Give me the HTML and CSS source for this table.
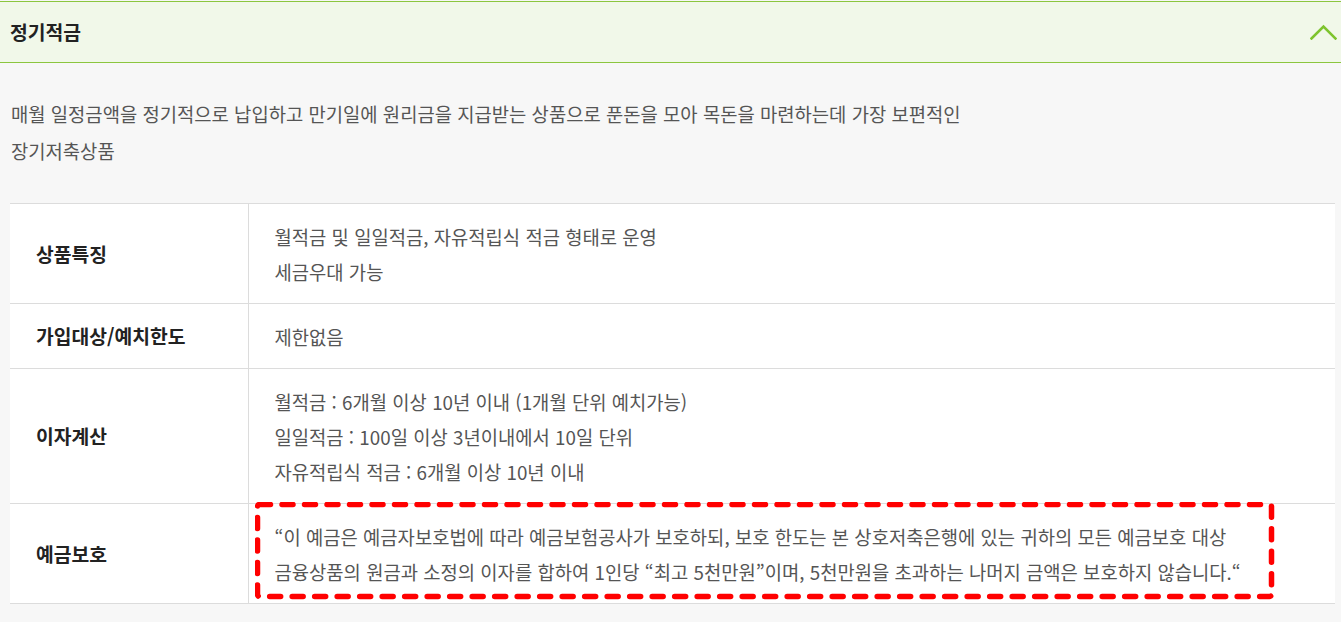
FILE: index.html
```html
<!DOCTYPE html>
<html lang="ko">
<head>
<meta charset="utf-8">
<title>정기적금</title>
<link rel="stylesheet" href="styles.css">
</head>
<body>
<div class="panel">
  <div class="panel-head">
    <h2 class="panel-title">정기적금</h2>
    <svg class="chevron" width="27" height="16" viewBox="0 0 27 16" aria-hidden="true">
      <polyline points="1.5,14.5 13.5,2.5 25.5,14.5" fill="none" stroke="#7ec42e" stroke-width="2.6" stroke-linecap="square"/>
    </svg>
  </div>
  <div class="panel-body">
    <p class="desc">매월 일정금액을 정기적으로 납입하고 만기일에 원리금을 지급받는 상품으로 푼돈을 모아 목돈을 마련하는데 가장 보편적인<br>장기저축상품</p>
    <table class="info">
      <tbody>
        <tr>
          <th>상품특징</th>
          <td>월적금 및 일일적금, 자유적립식 적금 형태로 운영<br>세금우대 가능</td>
        </tr>
        <tr>
          <th>가입대상/예치한도</th>
          <td>제한없음</td>
        </tr>
        <tr>
          <th>이자계산</th>
          <td>월적금 : 6개월 이상 10년 이내 (1개월 단위 예치가능)<br>일일적금 : 100일 이상 3년이내에서 10일 단위<br>자유적립식 적금 : 6개월 이상 10년 이내</td>
        </tr>
        <tr>
          <th>예금보호</th>
          <td class="protect">“이 예금은 예금자보호법에 따라 예금보험공사가 보호하되, 보호 한도는 본 상호저축은행에 있는 귀하의 모든 예금보호 대상<br>금융상품의 원금과 소정의 이자를 합하여 1인당 “최고 5천만원”이며, 5천만원을 초과하는 나머지 금액은 보호하지 않습니다.“
            <svg class="mark" width="1020" height="98" viewBox="0 0 1020 98" aria-hidden="true">
              <rect x="2.5" y="2.5" width="1014" height="92" rx="2" fill="none" stroke="#ff0000" stroke-width="5.5" stroke-linecap="round" stroke-dasharray="11 11.5"/>
            </svg>
          </td>
        </tr>
      </tbody>
    </table>
  </div>
</div>
</body>
</html>
```
FILE: styles.css
```css
* { box-sizing: border-box; }
html, body {
  margin: 0;
  padding: 0;
  background: #f7f7f7;
}
body {
  font-family: "Noto Sans CJK KR", "Noto Sans", sans-serif;
  font-size: 18.8px;
  color: #555;
}
.panel {
  padding-top: 1px;
}
.panel-head {
  height: 62px;
  display: flex;
  align-items: center;
  justify-content: space-between;
  padding: 0 4px 0 10px;
  background: #f1f8e9;
  border-top: 1px solid #8cc63f;
  border-bottom: 1px solid #8cc63f;
}
.panel-title {
  margin: 0;
  font-size: 19.3px;
  font-weight: 700;
  color: #222;
}
.chevron {
  display: block;
  margin-top: 0;
}
.panel-body {
  padding: 0 6px 0 10px;
}
.desc {
  margin: 32px 0 34px;
  padding-left: 1px;
  line-height: 37px;
  color: #555;
}
.info {
  width: 100%;
  border-collapse: collapse;
  background: #fff;
  border-top: 1px solid #dcdcdc;
}
.info tr {
  border-bottom: 1px solid #dcdcdc;
}
.info th {
  width: 238px;
  text-align: left;
  font-size: 19.3px;
  font-weight: 700;
  color: #222;
  padding: 0 0 0 26px;
  vertical-align: middle;
  border-right: 1px solid #dcdcdc;
}
.info td {
  padding: 15px 10px 14px 26px;
  line-height: 35px;
  color: #555;
}
.protect {
  position: relative;
}
.mark {
  position: absolute;
  left: 6.5px;
  top: -2.5px;
  pointer-events: none;
}
```
